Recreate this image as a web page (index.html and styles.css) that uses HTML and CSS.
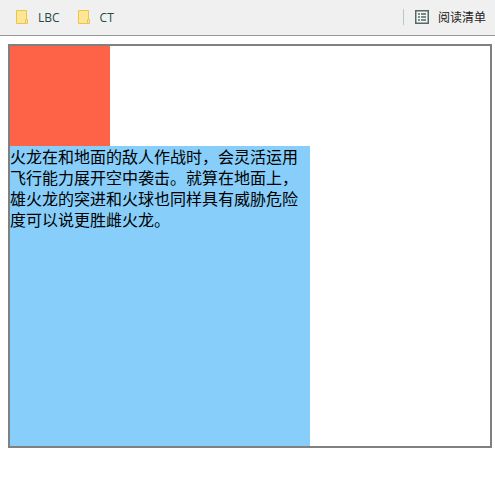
FILE: index.html
```html
<!DOCTYPE html>
<html lang="zh-CN">
<head>
<meta charset="utf-8">
<title>火龙</title>
<link rel="stylesheet" href="styles.css">
</head>
<body>
<header class="bookmarks">
  <div class="bookmark">
    <svg class="folder" width="12" height="14" viewBox="0 0 12 14"><path d="M.5.5h10v13H.5z" fill="#ffe694" stroke="#e8c64d"/><path d="M9.5 9.5h2v4h-2z" fill="#ffe694" stroke="#e8c64d"/></svg>
    <span class="label">LBC</span>
  </div>
  <div class="bookmark">
    <svg class="folder" width="12" height="14" viewBox="0 0 12 14"><path d="M.5.5h10v13H.5z" fill="#ffe694" stroke="#e8c64d"/><path d="M9.5 9.5h2v4h-2z" fill="#ffe694" stroke="#e8c64d"/></svg>
    <span class="label">CT</span>
  </div>
  <div class="reading-list">
    <svg class="list-icon" width="14" height="14" viewBox="0 0 14 14"><path d="M.75.75h12.5v12.5H.75z" fill="#f4f7f6" stroke="#526a65" stroke-width="1.5"/><path d="M3 3.25h2v1.5H3zM6 3.25h5v1.5H6zM3 6.25h2v1.5H3zM6 6.25h5v1.5H6zM3 9.25h2v1.5H3zM6 9.25h5v1.5H6z" fill="#526a65"/></svg>
    <span class="reading-label">阅读清单</span>
  </div>
</header>
<main class="container">
  <div class="red"></div>
  <div class="blue">火龙在和地面的敌人作战时，会灵活运用飞行能力展开空中袭击。就算在地面上，雄火龙的突进和火球也同样具有威胁危险度可以说更胜雌火龙。</div>
</main>
</body>
</html>
```
FILE: styles.css
```css
body {
  margin: 0;
  background: #fff;
  color: #000;
  font-family: "Noto Sans CJK SC", sans-serif;
}

.bookmarks {
  box-sizing: border-box;
  display: flex;
  align-items: center;
  gap: 18px;
  height: 36px;
  padding: 0 9px 1px 16px;
  background: #f0f0f0;
  border-bottom: 1px solid #989898;
  color: #234b49;
  font-size: 12px;
  line-height: 16px;
}

.bookmark {
  display: flex;
  align-items: center;
  gap: 10px;
}

.label {
  padding-top: 2px;
  font-family: "Open Sans", "Noto Sans", sans-serif;
}

.folder,
.list-icon {
  display: block;
}

.reading-list {
  display: flex;
  align-items: center;
  height: 16px;
  margin-left: auto;
  padding-left: 11px;
  border-left: 1px solid #bec6c4;
  gap: 9px;
}

.reading-label {
  color: #222;
}

.container {
  width: 480px;
  height: 400px;
  margin: 8px;
  border: 2px solid #808080;
}

.red {
  width: 100px;
  height: 100px;
  background: tomato;
}

.blue {
  width: 300px;
  height: 300px;
  background: lightskyblue;
  font-size: 16px;
  line-height: 21px;
}
```
